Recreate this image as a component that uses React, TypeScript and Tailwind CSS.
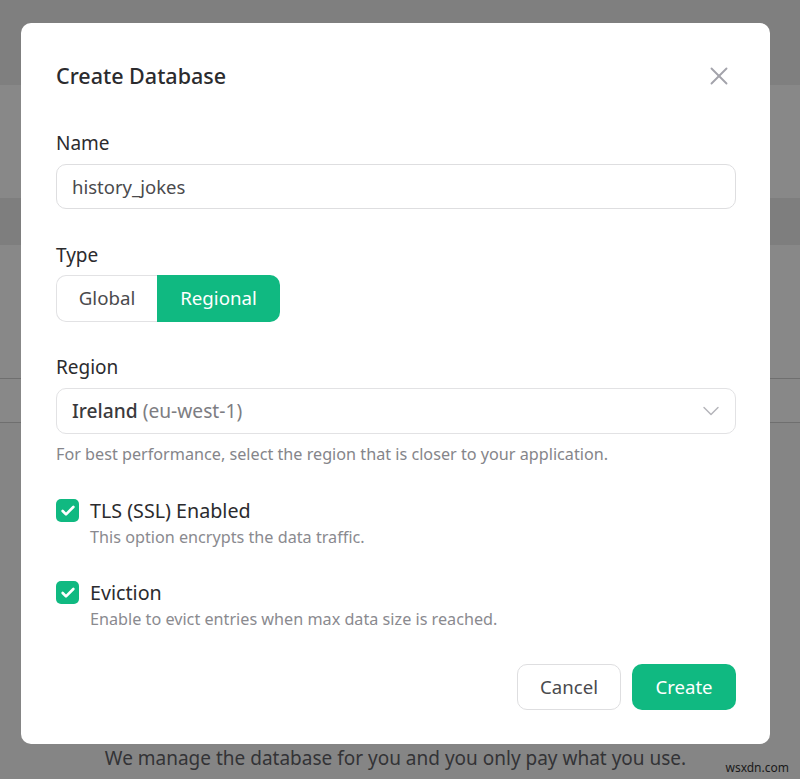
import React from 'react';
import { Check, ChevronDown, X } from 'lucide-react';

const Option = ({ title, hint }: { title: string; hint: string }) => (
  <div className="flex">
    <span className="mt-[1px] flex h-[23px] w-[23px] shrink-0 items-center justify-center rounded-[5px] bg-[#10b981]">
      <Check size={16} strokeWidth={4} className="text-white" />
    </span>
    <div className="ml-[11px]">
      <div className="text-[19.7px] leading-[26px] text-[#2b2b2e]">{title}</div>
      <div className="text-[16.2px] leading-[26px] text-[#8a8a8f]">{hint}</div>
    </div>
  </div>
);

const App = () => {
  return (
    <div className="relative h-[779px] w-[800px] overflow-hidden bg-[#888888] font-['Noto_Sans',sans-serif]">
      {/* page behind the backdrop */}
      <div className="h-[85px] bg-[#7f7f7f]" />
      <div className="h-[113px] bg-[#888888]" />
      <div className="h-[47px] bg-[#7e7e7e]" />
      <div className="h-[133px] bg-[#888888]" />
      <div className="h-[45px] border-y border-[#6f6f6f] bg-[#888888]" />
      <div className="h-[356px] bg-[#858585] pr-[9px] pt-[321px] text-center text-[19px] leading-[28px] text-[#333336]">
        We manage the database for you and you only pay what you use.
      </div>
      <div className="absolute bottom-[2px] right-[11px] text-[12px] text-[#1a1a1a]">wsxdn.com</div>

      {/* dialog */}
      <div className="absolute left-[21px] top-[23px] h-[721px] w-[749px] rounded-[10px] bg-white pl-[35px] pr-[34px] pt-[37px]">
        <div className="flex h-[32px] items-center justify-between">
          <h2 className="text-[21.5px] font-medium leading-[32px] text-[#2b2b2e]">Create Database</h2>
          <X size={30} strokeWidth={1.5} className="mr-[2px] text-[#a3a3ab]" />
        </div>

        <div className="mt-[37px] text-[19px] leading-[28px] text-[#2b2b2e]">Name</div>
        <div className="mt-[7px] flex h-[45px] items-center rounded-[10px] border border-[#dedee0] px-[15px] text-[18.5px] text-[#4a4a4d]">
          history_jokes
        </div>

        <div className="mt-[32px] text-[19px] leading-[28px] text-[#2b2b2e]">Type</div>
        <div className="mt-[6px] flex h-[47px] w-[224px] text-[18.7px]">
          <div className="flex w-[101px] items-center justify-center rounded-l-[10px] border border-r-0 border-[#e2e2e4] text-[#4a4a4d]">Global</div>
          <div className="flex w-[123px] items-center justify-center rounded-r-[10px] bg-[#10b981] text-white">Regional</div>
        </div>

        <div className="mt-[31px] text-[19px] leading-[28px] text-[#2b2b2e]">Region</div>
        <div className="mt-[7px] flex h-[46px] items-center justify-between rounded-[10px] border border-[#e2e2e4] pl-[15px] pr-[10px] text-[19.2px]">
          <span>
            <span className="font-medium text-[#3a3a3d]">Ireland</span>{' '}
            <span className="text-[#7d7d82]">(eu-west-1)</span>
          </span>
          <ChevronDown size={28} strokeWidth={1.25} className="text-[#b5b5ba]" />
        </div>
        <p className="mt-[9px] text-[16.2px] leading-[22px] text-[#85858a]">
          For best performance, select the region that is closer to your application.
        </p>

        <div className="mt-[33px]">
          <Option title="TLS (SSL) Enabled" hint="This option encrypts the data traffic." />
        </div>
        <div className="mt-[30px]">
          <Option title="Eviction" hint="Enable to evict entries when max data size is reached." />
        </div>

        <div className="mt-[32px] flex justify-end gap-[11px] text-[18.6px]">
          <button className="h-[46px] w-[104px] rounded-[10px] border border-[#dedee0] text-[#4a4a4d]">Cancel</button>
          <button className="h-[46px] w-[104px] rounded-[10px] bg-[#10b981] text-white">Create</button>
        </div>
      </div>
    </div>
  );
};

export default App;
